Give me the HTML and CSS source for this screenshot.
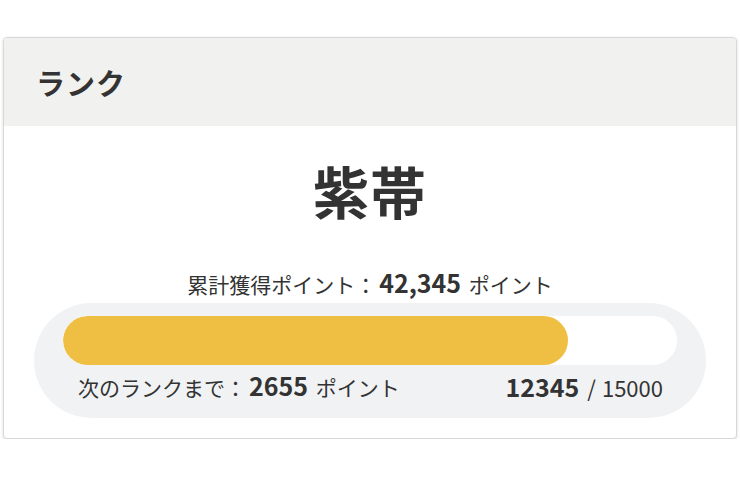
FILE: index.html
```html
<!DOCTYPE html>
<html>
<head>
    <title>ランク</title>
    <link rel="stylesheet" href="styles.css">
</head>
<body>
    <div class="rank-card">
        <!-- ヘッダー -->
        <div class="rank-header">ランク</div>

        <div class="rank-body">
            <div class="rank-name">紫帯</div>
            <div class="total-points">累計獲得ポイント：<b>42,345</b> ポイント</div>

            <!-- 進捗 -->
            <div class="progress-box">
                <div class="progress-track">
                    <div class="progress-fill" style="width: 82.3%"></div>
                </div>
                <div class="progress-info">
                    <span>次のランクまで：<b>2655</b> ポイント</span>
                    <span class="progress-count"><b>12345</b><i>/</i>15000</span>
                </div>
            </div>
        </div>
    </div>
</body>
</html>
```

FILE: styles.css
```css
body {
    margin: 0;
    padding: 37px 3px 0;
    background: #fff;
    font-family: "Noto Sans CJK JP", "Noto Sans", sans-serif;
    color: #333;
}

.rank-card {
    border: 1px solid #d8d8d8;
    border-radius: 4px;
    box-shadow: 0 1px 3px rgba(0, 0, 0, 0.15);
    overflow: hidden;
    background: #fff;
}

.rank-header {
    background: #f1f1f0;
    height: 88px;
    display: flex;
    align-items: center;
    padding-left: 32px;
    font-size: 29px;
    font-weight: bold;
    letter-spacing: 1px;
}

.rank-body {
    padding: 24px 30px 20px;
    text-align: center;
}

.rank-name {
    font-size: 56px;
    font-weight: bold;
    line-height: 80px;
    letter-spacing: 1px;
}

.total-points {
    margin-top: 38px;
    font-size: 21px;
    line-height: 28px;
}

.total-points b,
.progress-info b {
    font-size: 25px;
    margin: 0 3px;
}

.progress-box {
    margin-top: 5px;
    background: #f1f2f3;
    border-radius: 58px;
    padding: 13px 29px 11px;
}

.progress-track {
    height: 49px;
    background: #fff;
    border-radius: 25px;
    overflow: hidden;
}

.progress-fill {
    height: 100%;
    background: #efbf43;
    border-radius: 25px;
}

.progress-info {
    display: flex;
    justify-content: space-between;
    align-items: center;
    padding: 0 14px 0 15px;
    height: 42px;
    font-size: 21px;
    line-height: 28px;
}

.progress-count {
    font-size: 22px;
}

.progress-count b {
    margin: 0;
}

.progress-count i {
    font-style: normal;
    margin: 0 6px 0 8px;
}
```
